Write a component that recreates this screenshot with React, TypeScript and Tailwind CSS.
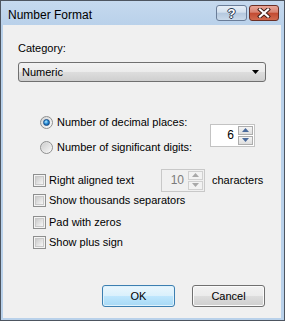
import React from "react";

function Radio({ checked }: { checked?: boolean }) {
  return (
    <div className="w-[13px] h-[13px] rounded-full border border-[#8e8f8f] bg-[linear-gradient(135deg,#d4d4d4,#fbfbfb)] flex items-center justify-center shrink-0">
      {checked ? (
        <div className="w-[7px] h-[7px] rounded-full bg-[radial-gradient(circle_at_40%_35%,#b9ecff_0%,#2b8fd8_45%,#0d3f7c_100%)] border border-[#124c8a]" />
      ) : (
        <div className="w-[9px] h-[9px] rounded-full bg-[linear-gradient(135deg,#cfcfcf,#f4f4f4)]" />
      )}
    </div>
  );
}

function Check() {
  return (
    <div className="w-[13px] h-[13px] border border-[#8e8f8f] bg-[#f4f4f4] flex items-center justify-center shrink-0">
      <div className="w-[9px] h-[9px] border border-[#c9c9c9] bg-[linear-gradient(135deg,#cbcbcb,#f6f6f6)]" />
    </div>
  );
}

function Tri({ up, color }: { up?: boolean; color: string }) {
  return (
    <svg width="7" height="4" viewBox="0 0 7 4">
      {up ? <path d="M0 4 L3.5 0 L7 4 Z" fill={color} /> : <path d="M0 0 L7 0 L3.5 4 Z" fill={color} />}
    </svg>
  );
}

function Spin({ value, disabled }: { value: string; disabled?: boolean }) {
  const tri = disabled ? "#a8a8a8" : "#4a6a9c";
  return (
    <div
      className={
        "flex h-[23px] border " +
        (disabled ? "w-[44px] border-[#c8c8c8] bg-[#f0f0f0]" : "w-[45px] border-[#c3c3c3] bg-white")
      }
    >
      <div
        className={
          "flex-1 flex items-center justify-end pr-[4px] text-[12px] " +
          (disabled ? "text-[#7a7a7a]" : "text-black")
        }
      >
        {value}
      </div>
      <div className="flex flex-col gap-[1px] py-[1px] pr-[1px] w-[16px]">
        <div className={"flex-1 border flex items-center justify-center " + (disabled ? "border-[#d0d0d0] bg-[#f2f2f2]" : "border-[#adadad] bg-[linear-gradient(#f4f4f4,#dedede)]")}>
          <Tri up color={tri} />
        </div>
        <div className={"flex-1 border flex items-center justify-center " + (disabled ? "border-[#d0d0d0] bg-[#f2f2f2]" : "border-[#adadad] bg-[linear-gradient(#f4f4f4,#dedede)]")}>
          <Tri color={tri} />
        </div>
      </div>
    </div>
  );
}

export default function App() {
  return (
    <div className="w-[285px] h-[321px] border border-[#4d5560] bg-[#b9d1ea] flex flex-col font-['Liberation_Sans',Arial,sans-serif] text-[11px] text-black leading-none">
      {/* Title bar */}
      <div className="h-[24px] flex items-start pl-[7px] pr-[5px] bg-[linear-gradient(#c5d9ee,#b9d1ea)]">
        <div className="text-[12px] leading-none mt-[8px]">Number Format</div>
        <div className="ml-auto flex gap-[2px] mt-[4px]">
          <div className="w-[31px] h-[16px] rounded-[3px] border border-[#6a7d98] bg-[linear-gradient(#e6eef7_0%,#d3e0ee_45%,#b4c8de_50%,#c9d9ea_100%)] flex items-center justify-center">
            <span className="text-[13px] font-bold text-white leading-none [text-shadow:0_0_1px_#2b3a52,1px_0_0_#2b3a52,-1px_0_0_#2b3a52,0_1px_0_#2b3a52,0_-1px_0_#2b3a52]">?</span>
          </div>
          <div className="w-[30px] h-[16px] rounded-[3px] border border-[#6b2f25] bg-[linear-gradient(#e9a597_0%,#d88371_45%,#c24a31_50%,#d16a4f_100%)] flex items-center justify-center">
            <svg width="14" height="10" viewBox="0 0 14 10">
              <path d="M3 1.5 L11 8.5 M11 1.5 L3 8.5" stroke="#3a1a14" strokeWidth="4" strokeLinecap="square" />
              <path d="M3 1.5 L11 8.5 M11 1.5 L3 8.5" stroke="#ffffff" strokeWidth="2.2" strokeLinecap="square" />
            </svg>
          </div>
        </div>
      </div>

      {/* Client area */}
      <div className="flex-1 ml-[2px] mr-[3px] mb-[2px] bg-[#f0f0f0] flex flex-col pl-[15px]">
        <div className="mt-[16px] h-[14px] leading-[14px]">Category:</div>
        <div className="mt-[7px] w-[248px] h-[20px] rounded-[3px] border border-[#707070] bg-[linear-gradient(#f2f2f2_0%,#ebebeb_50%,#dddddd_51%,#cfcfcf_100%)] flex items-center pl-[3px] pr-[6px]">
          <span>Numeric</span>
          <svg className="ml-auto" width="7" height="4" viewBox="0 0 7 4">
            <path d="M0 0 L7 0 L3.5 4 Z" fill="#000" />
          </svg>
        </div>

        {/* Radios + spin */}
        <div className="mt-[28px] flex items-center">
          <div className="ml-[22px] w-[170px] flex flex-col">
            <div className="h-[25px] flex items-center gap-[4px]">
              <Radio checked />
              <span>Number of decimal places:</span>
            </div>
            <div className="h-[25px] flex items-center gap-[4px]">
              <Radio />
              <span>Number of significant digits:</span>
            </div>
          </div>
          <Spin value="6" />
        </div>

        {/* Checkboxes */}
        <div className="mt-[8px] ml-[15px] flex flex-col">
          <div className="h-[24px] flex items-center">
            <div className="w-[128px] flex items-center gap-[3px]">
              <Check />
              <span>Right aligned text</span>
            </div>
            <Spin value="10" disabled />
            <span className="ml-[7px]">characters</span>
          </div>
          <div className="h-[16px] flex items-center gap-[3px]">
            <Check />
            <span>Show thousands separators</span>
          </div>
          <div className="mt-[6px] h-[16px] flex items-center gap-[3px]">
            <Check />
            <span>Pad with zeros</span>
          </div>
          <div className="mt-[4px] h-[16px] flex items-center gap-[3px]">
            <Check />
            <span>Show plus sign</span>
          </div>
        </div>

        {/* Buttons */}
        <div className="mt-auto mb-[11px] flex justify-end gap-[17px] pr-[16px]">
          <div className="w-[73px] h-[22px] rounded-[3px] border border-[#3c7fb1] bg-[linear-gradient(#eaf6fd_0%,#d9f0fc_50%,#bee6fd_51%,#a7d9f5_100%)] shadow-[inset_0_0_0_1px_#dff2fc] flex items-center justify-center">
            OK
          </div>
          <div className="w-[73px] h-[22px] rounded-[3px] border border-[#707070] bg-[linear-gradient(#f2f2f2_0%,#ebebeb_50%,#dddddd_51%,#cfcfcf_100%)] shadow-[inset_0_0_0_1px_#fbfbfb] flex items-center justify-center">
            Cancel
          </div>
        </div>
      </div>
    </div>
  );
}
